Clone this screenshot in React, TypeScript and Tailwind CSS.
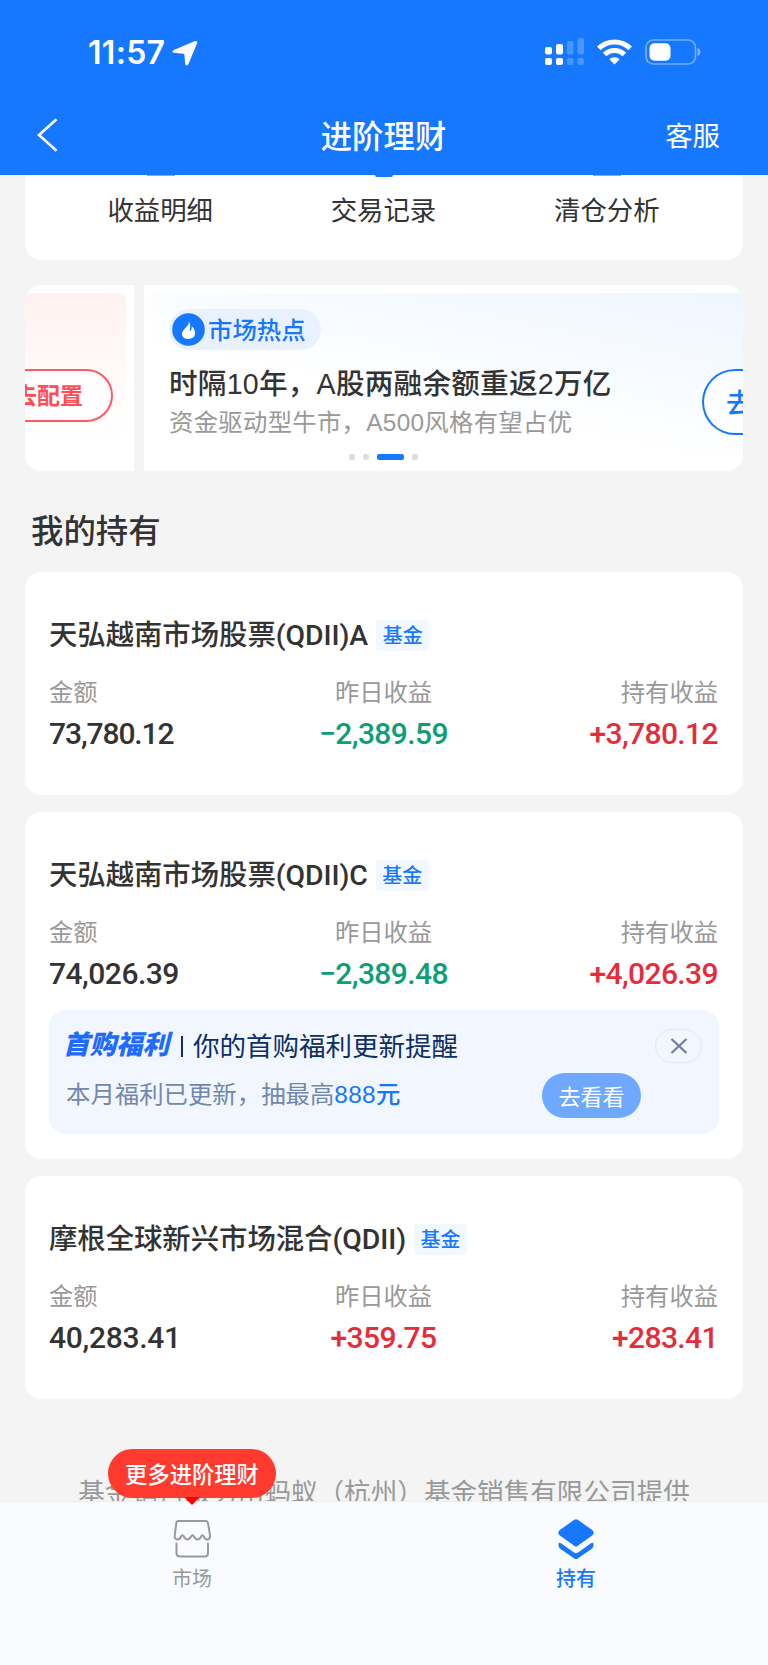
import { ReactNode } from 'react';

interface Holding {
  name: string;
  amount: string;
  amountTracking: string;
  yesterday: string;
  yesterdayUp: boolean;
  total: string;
  promo?: boolean;
}

const holdings: Holding[] = [
  { name: '天弘越南市场股票(QDII)A', amount: '73,780.12', amountTracking: 'tracking-[-1.1px]', yesterday: '−2,389.59', yesterdayUp: false, total: '+3,780.12' },
  { name: '天弘越南市场股票(QDII)C', amount: '74,026.39', amountTracking: 'tracking-[-0.5px]', yesterday: '−2,389.48', yesterdayUp: false, total: '+4,026.39', promo: true },
  { name: '摩根全球新兴市场混合(QDII)', amount: '40,283.41', amountTracking: 'tracking-[-0.3px]', yesterday: '+359.75', yesterdayUp: true, total: '+283.41' },
];

const StatusBar = () => (
  <div className="flex h-[97px] items-center pt-[8px] pl-[88px] pr-[67px] text-white">
    <span className="font-['Inter',sans-serif] text-[32px] font-semibold leading-none tracking-[0.3px]">11:57</span>
    <svg className="ml-[7px] h-[26px] w-[26px]" viewBox="0 0 26 26" fill="currentColor">
      <path d="M23 1.100 1.800 9.900C.1 10.600.2 12.500 1.900 12.800l9.400 1c.7.1 1 .4 1.100 1.100l.8 9c.2 1.800 2.400 2 3.200.4L25.200 3C25.700 1.700 24.500.5 23 1.100Z" />
    </svg>
    <svg className="ml-auto h-[28px] w-[40px] -mt-[2px]" viewBox="0 0 40 28" fill="currentColor">
      <rect x="0" y="9" width="7" height="7.500" rx="2" />
      <rect x="11" y="6" width="7" height="10.500" rx="2" />
      <g opacity="0.22">
        <rect x="22" y="3" width="6.500" height="13.500" rx="2" />
        <rect x="32.500" y="0" width="6.500" height="16.500" rx="2" />
        <rect x="22" y="20" width="6.500" height="7" rx="2" />
        <rect x="32.500" y="20" width="6.500" height="7" rx="2" />
      </g>
      <rect x="0" y="20" width="7" height="7" rx="2" />
      <rect x="11" y="20" width="7" height="7" rx="2" />
    </svg>
    <svg className="ml-[12px] -mt-[2px] h-[26px] w-[35px]" viewBox="0 0 35 26" fill="none" stroke="currentColor" strokeWidth="5">
      <path d="M1.800 9.400a22.300 22.300 0 0 1 31.400 0" />
      <path d="M7.600 15.600a14 14 0 0 1 19.800 0" />
      <path d="M17.500 25.500 12.300 20.300a7.400 7.400 0 0 1 10.400 0Z" fill="currentColor" stroke="none" />
    </svg>
    <svg className="ml-[13px] -mt-[2px] h-[26px] w-[56px]" viewBox="0 0 56 26" fill="none">
      <rect x="1" y="1" width="49.500" height="24" rx="7.500" stroke="white" strokeOpacity="0.4" strokeWidth="1.700" />
      <rect x="4.500" y="4.300" width="21" height="17.500" rx="5" fill="white" />
      <path d="M52.500 9v8c2-.6 3-2.200 3-4s-1-3.400-3-4Z" fill="white" fillOpacity="0.45" />
    </svg>
  </div>
);

const Header = () => (
  <header className="h-[175px] shrink-0 bg-[#1677ff]">
    <StatusBar />
    <div className="grid h-[76px] grid-cols-3 items-center text-white">
      <svg className="ml-[37px] h-[34px] w-[21px]" viewBox="0 0 21 34" fill="none" stroke="currentColor" strokeWidth="2.600">
        <path d="M19.500 1.200 2 17l17.500 15.800" />
      </svg>
      <h1 className="pr-px pb-px text-center text-[31.400px] font-medium leading-none">进阶理财</h1>
      <span className="pr-[48px] pb-px text-right text-[27.400px] leading-none">客服</span>
    </div>
  </header>
);

const Shortcuts = () => (
  <div className="mx-[25px] grid h-[85px] grid-cols-3 overflow-hidden rounded-b-2xl bg-white px-[24px] text-center text-[26.400px] leading-none text-[#333]">
    {['收益明细', '交易记录', '清仓分析'].map((label, i) => (
      <div key={label} className="flex flex-col items-center">
        <div className={i === 1 ? 'h-[2px] w-[18px] rounded-b-full bg-[#1677ff]' : 'mb-px h-px w-[28px] bg-[#1677ff]/60'} />
        <span className="mt-[19px] mr-px">{label}</span>
      </div>
    ))}
  </div>
);

const Banner = () => (
  <div className="mx-[25px] mt-[25px] flex h-[186px] gap-[10px] overflow-hidden rounded-2xl">
    <div className="h-full w-[109px] shrink-0 bg-white pt-[8px] pr-[8px]">
      <div className="flex h-[170px] justify-end overflow-hidden rounded-r-lg bg-linear-to-b from-[#fff2f1] to-white to-85% pt-[76px] pr-[13px]">
        <div className="flex h-[53px] w-[130px] shrink-0 items-center justify-end rounded-full border-2 border-[#ff5a5f] bg-white/60 pr-[28px] pb-[3px] text-[23px] font-bold leading-none text-[#ff4d52]">
          去配置
        </div>
      </div>
    </div>
    <div className="relative h-full flex-1 bg-white pt-[8px] pl-[7px]">
      <div className="flex h-[158px] rounded-tl-lg bg-[linear-gradient(192deg,#eff6ff_0%,#f9fcff_42%,#ffffff_62%)] pl-[18px]">
        <div className="w-[470px] pt-[16px]">
          <div className="flex h-[41px] w-[152px] items-center rounded-full bg-[#e9f1fe] pl-[3px] text-[24.400px] font-medium leading-none text-[#1677ff]">
            <svg className="mr-[3px] h-[33px] w-[33px]" viewBox="0 0 33 33">
              <circle cx="16.500" cy="16.500" r="16.300" fill="#1677ff" />
              <path d="M16.600 8c.9 2.700-.7 4.200-2.800 6.600-2.300 2.600-3.800 4.300-3.800 6.300 0 3 2.900 5 6.500 5 3.700 0 6.500-2.100 6.500-5.700 0-3.300-1.500-5.600-3.400-7 .5 2.200-.2 4.200-2 5.200.6-3.300 1.300-7.500-1-10.400Z" fill="white" />
            </svg>
            市场热点
          </div>
          <div className="mt-[18px] whitespace-nowrap font-['Liberation_Sans','Noto_Sans_CJK_SC',sans-serif] text-[28.600px] font-medium leading-[32px] tracking-[0.24px] text-[#333]">
            时隔10年，A股两融余额重返2万亿
          </div>
          <div className="mt-[9px] whitespace-nowrap font-['Liberation_Sans','Noto_Sans_CJK_SC',sans-serif] text-[24.400px] leading-[28px] tracking-[0.27px] text-[#999]">
            资金驱动型牛市，A500风格有望占优
          </div>
        </div>
        <div className="mt-[76px] ml-[63px] flex h-[66px] w-[41px] items-center overflow-hidden rounded-l-full border-2 border-r-0 border-[#1677ff] bg-white/60 pb-[2px] pl-[22px] text-[27px] font-medium leading-none text-[#1677ff]">
          去
        </div>
      </div>
      {/* carousel dots */}
      <div className="mt-[3px] ml-[198px] flex h-[6px] gap-[8px]">
        <i className="w-[6px] rounded-xs bg-[#ddd]" />
        <i className="w-[6px] rounded-xs bg-[#ddd]" />
        <i className="w-[27px] rounded-xs bg-[#1677ff]" />
        <i className="w-[6px] rounded-xs bg-[#ddd]" />
      </div>
    </div>
  </div>
);

const Promo = () => (
  <div className="mt-[21px] -ml-px flex h-[124px] w-[670px] justify-between rounded-2xl bg-[#f2f6fe] pt-[19px] pr-[17px] pl-[17px]">
    <div>
      <div className="-mt-px flex h-[34px] items-center whitespace-nowrap text-[26.500px] leading-none text-[#0b2f66]">
        <span className="-ml-[3px] w-[107px] pb-[3px] text-[26.500px] font-black italic text-[#1f6bff]">首购福利</span>
        <span className="mt-[3px] mr-[10px] ml-[11px] h-[21px] w-[2px] bg-[#0b2f66]" />
        <span>你的首购福利更新提醒</span>
      </div>
      <div className="mt-[16px] whitespace-nowrap text-[24.400px] leading-[30px] text-[#7188ac]">
        本月福利已更新，抽最高
        <span className="font-['Liberation_Sans','Noto_Sans_CJK_SC',sans-serif] font-medium tracking-[0.3px] text-[#1677ff]">888元</span>
      </div>
    </div>
    <div className="flex flex-col items-end">
      <button className="flex h-[34px] w-[47px] items-center justify-center rounded-full border border-[#e2e8f5]">
        <svg className="h-[16px] w-[18px]" viewBox="0 0 18 16" fill="none" stroke="#6b7fa3" strokeWidth="2.200">
          <path d="m1.500 1 15 14M16.500 1l-15 14" />
        </svg>
      </button>
      <button className="mt-[10px] mr-[61px] h-[45px] w-[99px] rounded-full bg-[#6fa8ff] pb-[2px] text-[22px] leading-none text-white">去看看</button>
    </div>
  </div>
);

const Figure = ({ label, className, tracking = 'tracking-[-0.6px]', children }: { label: string; className: string; tracking?: string; children: ReactNode }) => (
  <div className={className}>
    <div className="text-[24.300px] leading-[30px] text-[#999]">{label}</div>
    <div className={`mt-[13px] font-['Roboto',sans-serif] text-[30px] font-medium leading-[30px] ${tracking}`}>{children}</div>
  </div>
);

const HoldingCard = ({ item }: { item: Holding }) => (
  <section className={`mb-[17px] rounded-2xl bg-white px-[25px] pt-[46px] ${item.promo ? 'h-[347px]' : 'h-[223px]'}`}>
    <div className="-ml-px flex h-[34px] items-center">
      <h3 className="whitespace-nowrap pt-[3px] font-['Roboto','Noto_Sans_CJK_SC',sans-serif] text-[28.400px] font-medium leading-none tracking-[-0.05px] text-[#333]">{item.name}</h3>
      <span className="ml-[8px] flex h-[31px] w-[53px] items-center justify-center rounded-sm bg-[#f2f8ff] pb-px text-[20px] font-medium leading-none text-[#1677ff]">基金</span>
    </div>
    <div className="mt-[24px] -ml-px grid w-[669px] grid-cols-3 whitespace-nowrap">
      <Figure label="金额" className="text-[#333]" tracking={item.amountTracking}>{item.amount}</Figure>
      <Figure label="昨日收益" className={item.yesterdayUp ? 'text-center text-[#e62c3b]' : 'text-center text-[#0e9d74]'}>{item.yesterday}</Figure>
      <Figure label="持有收益" className="text-right text-[#e62c3b]">{item.total}</Figure>
    </div>
    {item.promo && <Promo />}
  </section>
);

const TabBar = () => (
  <nav className="relative grid h-[164px] shrink-0 grid-cols-2 border-t border-[#eee] bg-[#fafbff] text-[20px] leading-none">
    <div className="flex flex-col items-center pt-[17px] text-[#999]">
      <svg className="h-[40px] w-[40px]" viewBox="0 0 40 40" fill="none" stroke="currentColor" strokeWidth="2" strokeLinecap="round" strokeLinejoin="round">
        <path d="M6.500 2h27c1.500 0 2.300.8 2.500 2.200l2 12c.4 2.700-.8 4.300-2.700 4.300-2.200 0-3-1.300-3.700-3.300-.4-1.300-1.800-1.300-2.300 0-.8 2-1.900 3.300-3.900 3.300s-2.700-1.500-3.700-3.300c-.7-1.300-1.700-1.300-2.400 0-1 1.800-1.800 3.300-3.800 3.300s-3-1.500-3.800-3.300c-.6-1.300-1.900-1.300-2.500 0-.7 2-1.700 3.300-3.900 3.300-1.900 0-2.900-1.600-2.500-4.300l1.500-12C4.500 2.800 5.200 2 6.500 2Z" />
        <path d="M4.500 24.500V34c0 2 1 3.500 3.500 3.500h24.500c2.500 0 3.500-1.500 3.500-3.500v-9.500" />
      </svg>
      <span className="mt-[9px]">市场</span>
    </div>
    <div className="flex flex-col items-center pt-[17px] text-[#1677ff]">
      <svg className="h-[41px] w-[36px]" viewBox="0 0 36 41" fill="currentColor">
        <path d="M16.300.8a3 3 0 0 1 3.400 0L33.800 10.700c2.500 1.800 2.500 4.300 0 6.100L19.500 27a2.600 2.600 0 0 1-3 0L2.200 16.800c-2.500-1.800-2.500-4.300 0-6.100Z" />
        <path d="M.700 24.300c.6-.7 1.500-.6 2.300 0L16 33.500c1.300.9 2.700.9 4 0L33 24.300c.8-.6 1.700-.7 2.300 0 .4 2 .4 4-1.500 5.500L19.700 39.500c-1.100.8-2.300.8-3.400 0L2.200 29.800C.3 28.300.3 26.300.7 24.300Z" />
      </svg>
      <span className="mt-[8px] font-medium">持有</span>
    </div>
    <div className="absolute -top-[53px] left-[108px] flex h-[49px] w-[168px] items-center justify-center rounded-full bg-[#ff3b30] pb-px text-[22.300px] font-medium text-white">
      更多进阶理财
      <i className="absolute top-[48px] left-[76px] border-x-8 border-t-8 border-x-transparent border-t-[#f00]" />
    </div>
  </nav>
);

const App = () => (
  <div className="flex h-[1665px] w-[768px] flex-col overflow-hidden bg-[#f4f4f4] font-['Noto_Sans_CJK_SC',sans-serif]">
    <Header />
    <main className="flex-1 overflow-hidden">
      <Shortcuts />
      <Banner />
      <h2 className="mt-[38px] ml-[31px] h-[63px] text-[32.400px] font-medium leading-[40px] text-[#333]">我的持有</h2>
      <div className="mx-[25px]">
        {holdings.map((item) => (
          <HoldingCard key={item.name} item={item} />
        ))}
      </div>
      <p className="mt-[76px] whitespace-nowrap text-center text-[26.600px] leading-[32px] text-[#999]">
        基金销售服务由蚂蚁（杭州）基金销售有限公司提供
      </p>
    </main>
    <TabBar />
  </div>
);

export default App;
